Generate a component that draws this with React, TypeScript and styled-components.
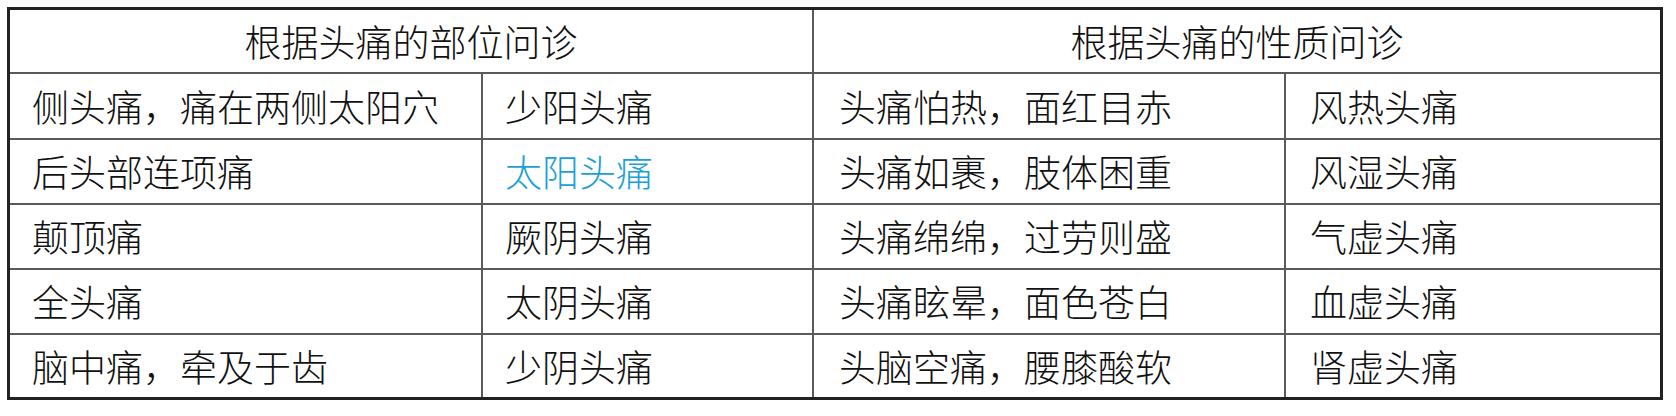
import styled, { createGlobalStyle } from "styled-components";

const GlobalStyle = createGlobalStyle`
    html, body {
        margin: 0;
        padding: 0;
        background: #ffffff;
    }
`;

const Page = styled.div`
    padding: 7px;
    width: 1676px;
    height: 416px;
    box-sizing: border-box;
    background: #fff;
`;

const Table = styled.div`
    display: grid;
    grid-template-columns: 473px 331px 472px 374px;
    grid-template-rows: 64px 66px 65px 65px 65px 62px;
    width: 1656px;
    border: 3px solid #222;
    box-sizing: border-box;
    font-family: "Noto Sans CJK SC", "Noto Sans", sans-serif;
    font-weight: 300;
    font-size: 37px;
    color: #111;
`;

const Cell = styled.div<{ $last?: boolean; $bottom?: boolean; $pad: number }>`
    display: flex;
    align-items: center;
    padding-left: ${(p) => p.$pad}px;
    box-sizing: border-box;
    border-right: ${(p) => (p.$last ? "none" : "2px solid #5a5a5a")};
    border-bottom: ${(p) => (p.$bottom ? "none" : "2px solid #5a5a5a")};
    white-space: nowrap;
    line-height: 1;
`;

const HeadCell = styled(Cell)`
    grid-column: span 2;
    justify-content: center;
    padding-left: 0;
`;

const Accent = styled.span`
    color: #1ba0d8;
`;

const rows: [string, string, string, string][] = [
    ["侧头痛，痛在两侧太阳穴", "少阳头痛", "头痛怕热，面红目赤", "风热头痛"],
    ["后头部连项痛", "太阳头痛", "头痛如裹，肢体困重", "风湿头痛"],
    ["颠顶痛", "厥阴头痛", "头痛绵绵，过劳则盛", "气虚头痛"],
    ["全头痛", "太阴头痛", "头痛眩晕，面色苍白", "血虚头痛"],
    ["脑中痛，牵及于齿", "少阴头痛", "头脑空痛，腰膝酸软", "肾虚头痛"],
];

const pads = [22, 22, 25, 24];

export default function App() {
    return (
        <Page>
            <GlobalStyle />
            <Table>
                <HeadCell $pad={0}>根据头痛的部位问诊</HeadCell>
                <HeadCell $pad={0} $last>根据头痛的性质问诊</HeadCell>
                {rows.map((r, i) =>
                    r.map((text, j) => (
                        <Cell
                            key={`${i}-${j}`}
                            $pad={pads[j]}
                            $last={j === 3}
                            $bottom={i === rows.length - 1}
                        >
                            {i === 1 && j === 1 ? <Accent>{text}</Accent> : text}
                        </Cell>
                    ))
                )}
            </Table>
        </Page>
    );
}
